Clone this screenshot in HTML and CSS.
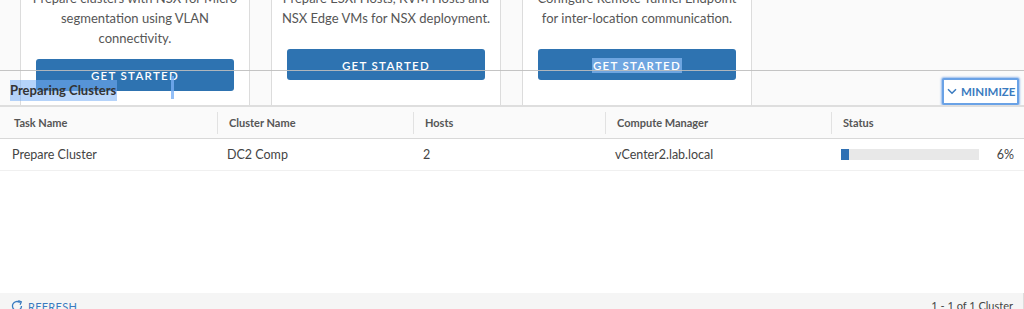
FILE: index.html
```html
<!DOCTYPE html>
<html>
<head>
<meta charset="utf-8">
<link rel="stylesheet" href="styles.css">
</head>
<body>
<div class="page">
  <div class="cards">
    <div class="card">
      <p class="card-text">Prepare clusters with NSX for Micro<br>segmentation using VLAN<br>connectivity.</p>
      <button class="btn btn-low"><span class="btn-label">GET STARTED</span></button>
    </div>
    <div class="card">
      <p class="card-text">Prepare ESXi Hosts, KVM Hosts and<br>NSX Edge VMs for NSX deployment.</p>
      <button class="btn"><span class="btn-label">GET STARTED</span></button>
    </div>
    <div class="card">
      <p class="card-text">Configure Remote Tunnel Endpoint<br>for inter-location communication.</p>
      <button class="btn"><span class="btn-label selected">GET STARTED</span></button>
    </div>
    <div class="cards-rest"></div>
  </div>

  <section class="panel">
    <div class="panel-head">
      <h2 class="panel-title"><span class="sel">Preparing Clusters</span></h2>
      <button class="minimize">
        <svg class="chev" width="10" height="7" viewBox="0 0 10 7"><path d="M1 1.2 L5 5.2 L9 1.2" fill="none" stroke="#3a7bc0" stroke-width="1.5"/></svg>
        <span>MINIMIZE</span>
      </button>
    </div>
    <div class="grid">
      <div class="row head">
        <div class="cell">Task Name</div>
        <div class="cell sep">Cluster Name</div>
        <div class="cell sep">Hosts</div>
        <div class="cell sep">Compute Manager</div>
        <div class="cell sep">Status</div>
      </div>
      <div class="row body">
        <div class="cell">Prepare Cluster</div>
        <div class="cell">DC2 Comp</div>
        <div class="cell">2</div>
        <div class="cell">vCenter2.lab.local</div>
        <div class="cell status">
          <div class="bar"><div class="fill" style="width:6%"></div></div>
          <span class="pct">6%</span>
        </div>
      </div>
      <div class="spacer"></div>
      <div class="footer">
        <div class="refresh">
          <svg width="14" height="14" viewBox="0 0 14 14"><path d="M11.5 7 A4.5 4.5 0 1 1 9.8 3.5" fill="none" stroke="#3a7bc0" stroke-width="1.3"/><path d="M8.3 1.6 L11.3 2.8 L10.1 5.8" fill="none" stroke="#3a7bc0" stroke-width="1.3"/></svg>
          <span>REFRESH</span>
        </div>
        <div class="count">1 - 1 of 1 Cluster</div>
      </div>
    </div>
    <div class="caret"></div>
  </section>
</div>
</body>
</html>
```
FILE: styles.css
```css
* { box-sizing: border-box; }
html, body { margin: 0; padding: 0; }
body {
  width: 1024px;
  height: 309px;
  overflow: hidden;
  background: #fafafa;
  font-family: Lato, "Open Sans", sans-serif;
  color: #333;
}
.page { position: relative; width: 1024px; height: 309px; overflow: hidden; }

.cards {
  display: flex;
  gap: 21px;
  padding-left: 20px;
  margin-top: -12px;
  height: 117px;
}
.card {
  width: 230px;
  background: #fff;
  border-left: 1px solid #dcdcdc;
  border-right: 1px solid #dcdcdc;
  padding: 0 15px;
  display: flex;
  flex-direction: column;
  align-items: center;
}
.cards-rest { flex: 1; }
.card-text {
  margin: 0;
  font-size: 13px;
  line-height: 20px;
  color: #565656;
  text-align: center;
  white-space: nowrap;
}
.btn {
  margin-top: 21px;
  width: 198px;
  height: 31px;
  flex: none;
  border: none;
  border-radius: 3px;
  background: #2e73b1;
  color: #fff;
  font-family: Lato, sans-serif;
  font-size: 11.5px;
  font-weight: 600;
  letter-spacing: 1.3px;
  display: flex;
  align-items: center;
  justify-content: center;
  padding: 1px 0 0 0;
}
.btn-low { margin-top: 11px; height: 32px; }
.btn-label.selected { background: #6ea5e0; padding: 1px 1px; }

.panel {
  position: absolute;
  left: 0; right: 0; top: 70px; bottom: 0;
  border-top: 1px solid rgba(190,190,190,0.9);
  display: flex;
  flex-direction: column;
}
.panel-head {
  height: 34px;
  display: flex;
  align-items: center;
  justify-content: space-between;
  padding: 0 5px 0 10px;
}
.panel-title {
  margin: 4px 0 0 0;
  font-size: 13px;
  font-weight: 700;
  color: #333;
  line-height: 21px;
}
.panel-title .sel { background: rgba(120,175,245,0.55); display: inline-block; padding-right: 1px; }
.minimize {
  margin-top: 6px;
  height: 27px;
  width: 77px;
  background: #fff;
  border: 2px solid #6aa2e6;
  box-shadow: 0 0 2px 1px rgba(110,160,230,0.7);
  border-radius: 2px;
  color: #3a7bc0;
  font-family: Lato, sans-serif;
  font-weight: 700;
  font-size: 11.5px;
  letter-spacing: 0;
  display: flex;
  align-items: center;
  gap: 4px;
  padding: 0 0 0 3px;
  white-space: nowrap;
}
.chev { flex: none; margin-top: 1px; }

.grid {
  flex: 1;
  background: #fff;
  border-top: 2px solid #dedede;
  display: flex;
  flex-direction: column;
}
.row {
  display: grid;
  grid-template-columns: 217px 196px 192px 226px 1fr;
  align-items: center;
}
.row.head {
  height: 32px;
  background: #fafafa;
  border-bottom: 1px solid #d8d8d8;
  font-size: 11px;
  font-weight: 700;
  color: #565656;
}
.row.head .cell { padding-left: 14px; }
.row.head .cell.sep { border-left: 1px solid #e2e2e2; padding-left: 11px; height: 22px; line-height: 22px; }
.row.body {
  height: 32px;
  font-size: 12.5px;
  color: #444;
  border-bottom: 1px solid #f0f0f0;
}
.row.body .cell { padding-left: 12px; }
.row.body .cell + .cell { padding-left: 10px; }
.status { display: flex; align-items: center; }
.row.body .status { padding-left: 11px; }
.bar {
  width: 138px;
  height: 11px;
  background: #e8e8e8;
}
.fill { height: 100%; background: #2f70b3; min-width: 8px; }
.pct { margin-left: auto; margin-right: 10px; font-size: 12.5px; color: #444; }

.spacer { flex: 1; }
.footer {
  height: 16px;
  background: #f5f5f5;
  display: flex;
  justify-content: space-between;
  align-items: flex-start;
  padding: 6px 10px 0 10px;
  font-size: 11px;
  border-right: 1px solid #ddd;
}
.refresh { display: flex; align-items: center; gap: 4px; color: #3a7bc0; letter-spacing: 0.3px; }
.count { color: #444; }

.caret {
  position: absolute;
  left: 171px;
  top: 5px;
  width: 3px;
  height: 23px;
  background: rgba(120,175,245,0.8);
}
```
